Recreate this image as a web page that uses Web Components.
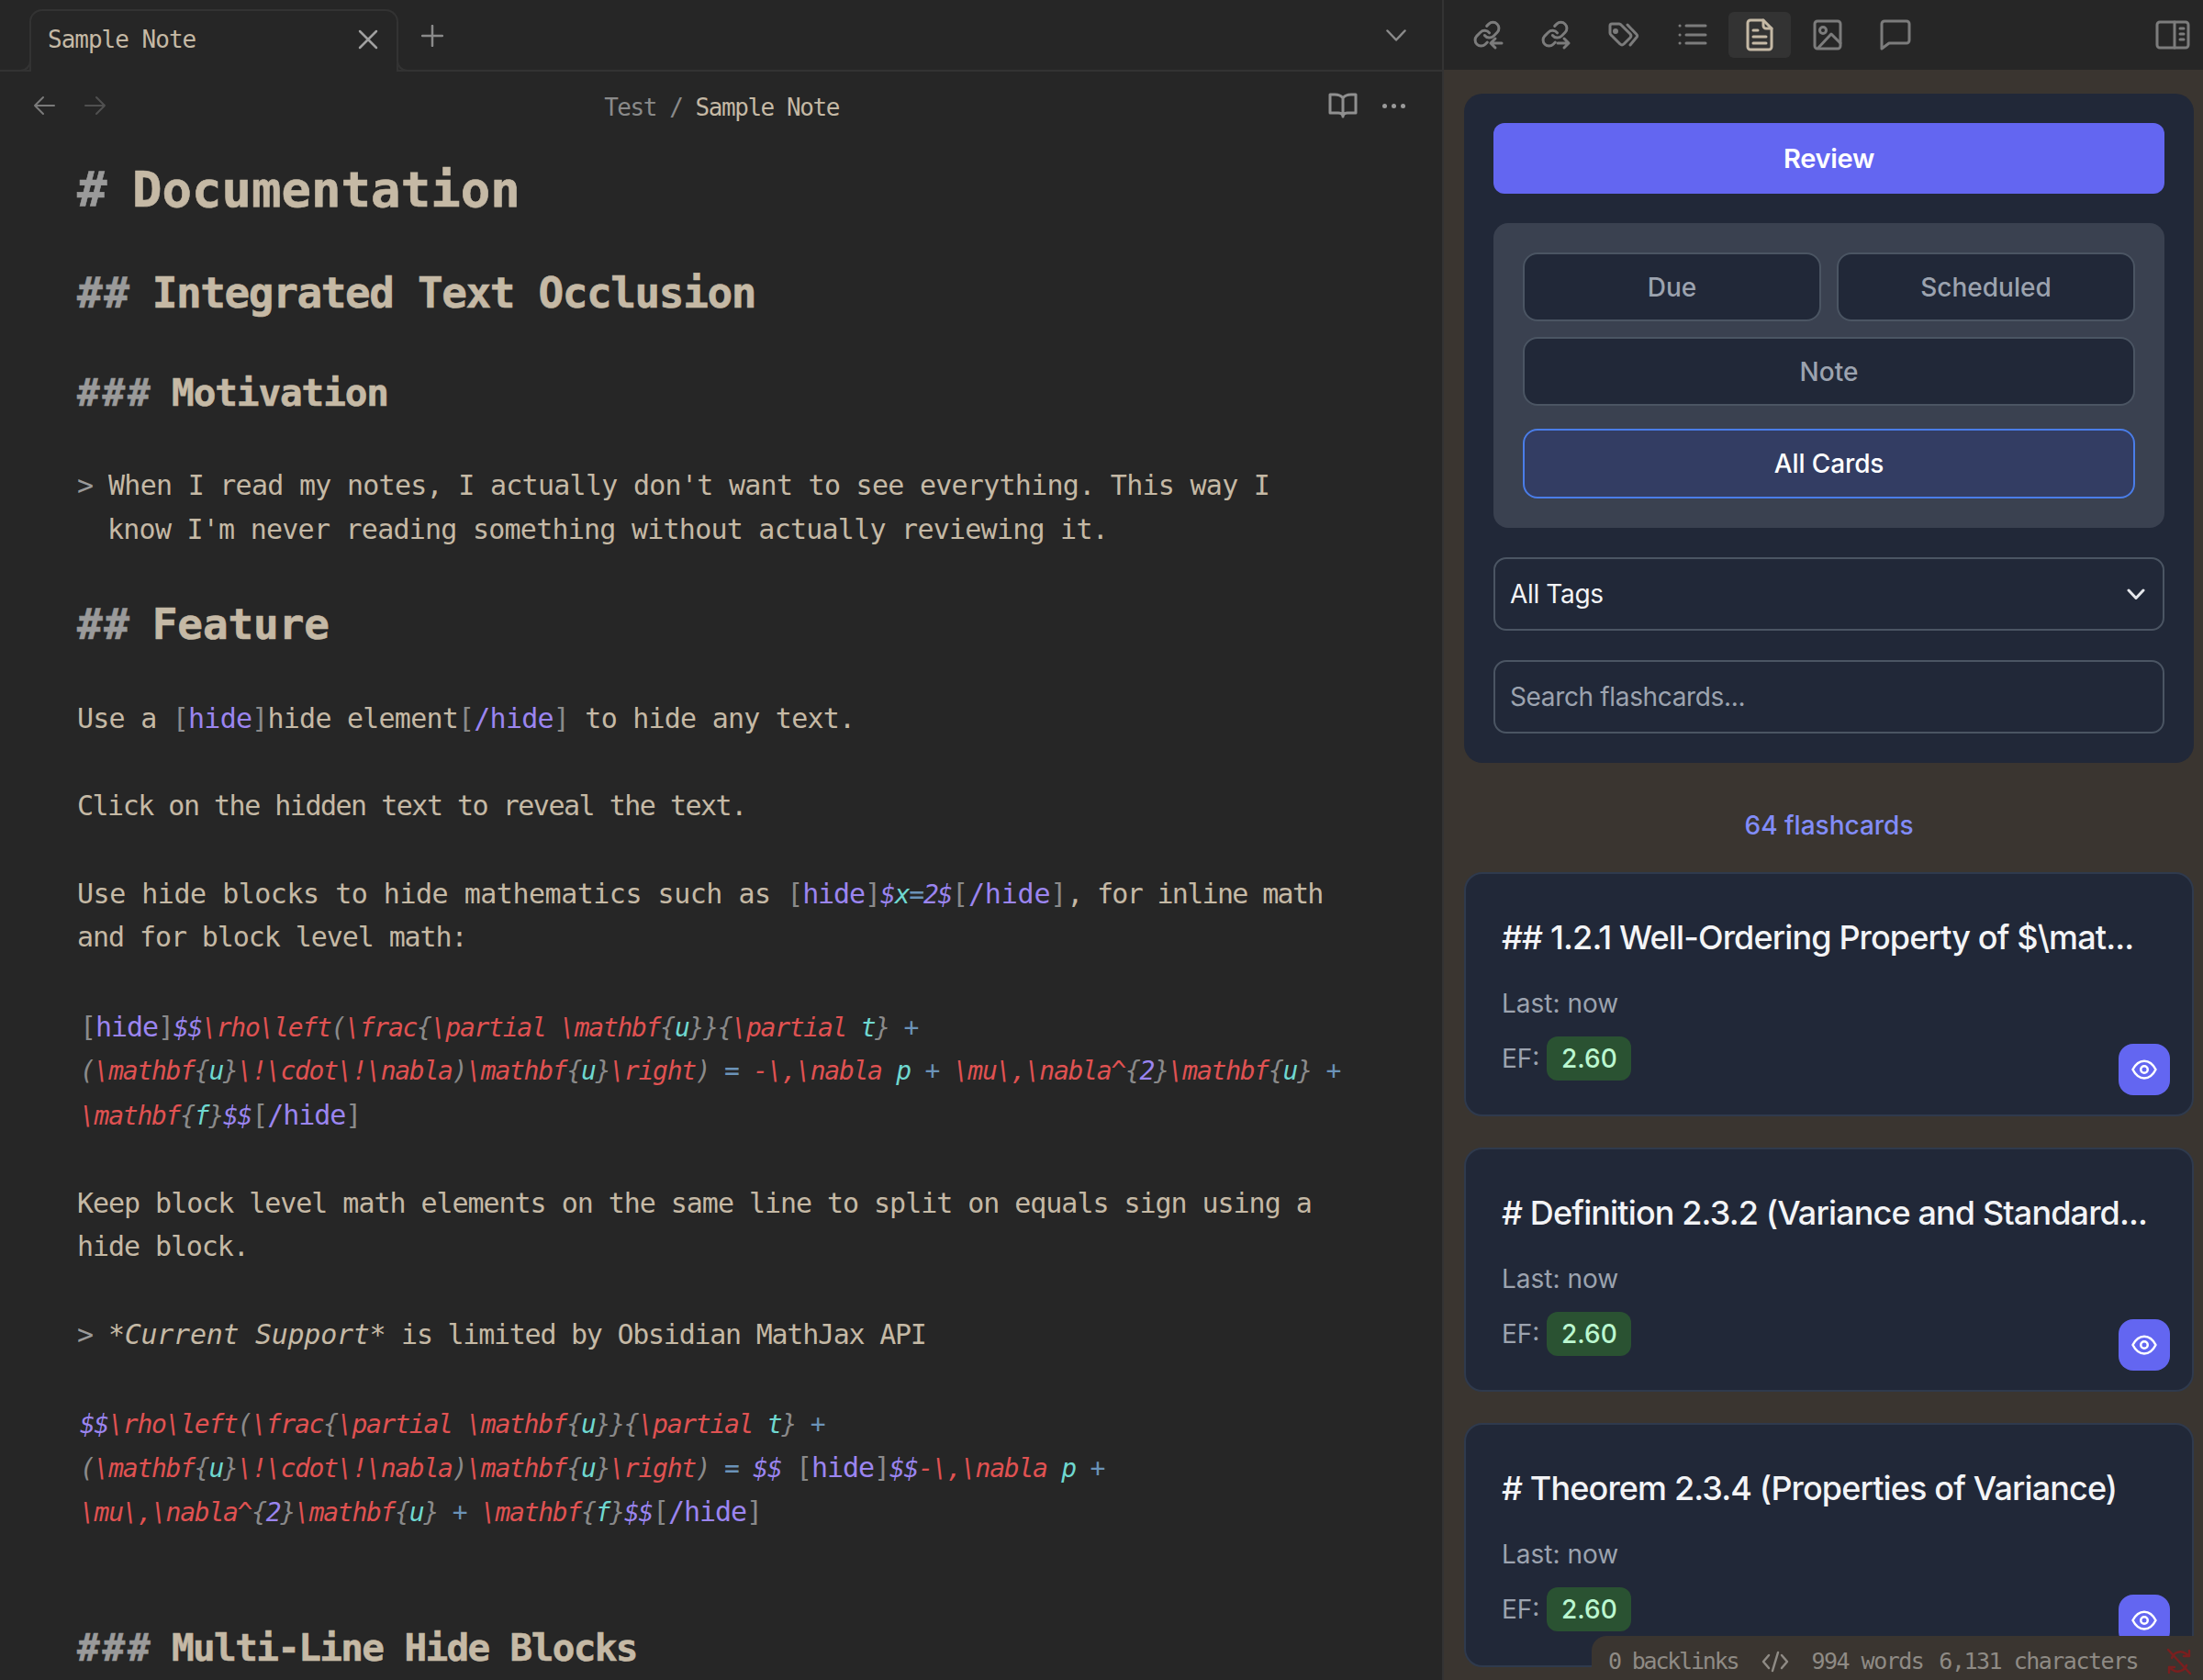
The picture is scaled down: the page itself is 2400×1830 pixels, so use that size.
<!DOCTYPE html>
<html>
<head>
<meta charset="utf-8">
<title>Sample Note</title>
<style>
  html, body { margin: 0; height: 100%; background: #262626; overflow: hidden; }
  body { display: flex; width: 2400px; height: 1830px; }
</style>
</head>
<body>
<note-pane></note-pane>
<side-pane></side-pane>

<script>
const MONO = '"DejaVu Sans Mono", "Liberation Mono", monospace';
const SANS = 'Inter, "Liberation Sans", sans-serif';

// stroke icons, all drawn on a 36 box
const svg = (body, size = 36, sw = 3) =>
  `<svg width="${size}" height="${size}" viewBox="0 0 36 36" fill="none" stroke="currentColor" stroke-width="${sw}" stroke-linecap="round" stroke-linejoin="round">${body}</svg>`;

const link = `<g transform="translate(2.4,1.600) scale(1.300)" stroke-width="2.300"><path d="M10 13a5 5 0 0 0 7.540.540l3-3a5 5 0 0 0-7.070-7.070l-1.720 1.710"/><path d="M14 11a5 5 0 0 0-7.540-.540l-3 3a5 5 0 0 0 7.070 7.070l1.710-1.710"/></g>`;

const icons = {
  linkIn: svg(link + '<path d="M34 27H22M27 22l-5 5 5 5"/>'),
  linkOut: svg(link + '<path d="M21 27h12M28 22l5 5-5 5"/>'),
  tags: svg('<path d="M6 6h8a3 3 0 0 1 2 1l10 10a3 3 0 0 1 0 4l-7 7a3 3 0 0 1-4 0L5 18a3 3 0 0 1-1-2V8a2 2 0 0 1 2-2z"/><path d="M23 7l10 10.500a2 2 0 0 1 0 3L26 29"/><circle cx="10" cy="14" r="1.500" fill="currentColor"/>'),
  list: svg('<path d="M12 8h21M12 18h21M12 27h21M5 8h.1M5 18h.1M5 27h.1"/>'),
  doc: svg('<path d="M22 2H8a3 3 0 0 0-3 3v26a3 3 0 0 0 3 3h20a3 3 0 0 0 3-3V11z"/><path d="M22 2v6a3 3 0 0 0 3 3h6"/><path d="M11 13h5M11 20h14M11 27h14"/>'),
  image: svg('<rect x="4" y="3" width="28" height="30" rx="3"/><circle cx="13" cy="13" r="3.500"/><path d="M8 32l14-15 10 10"/>'),
  comment: svg('<path d="M6 3h24a3 3 0 0 1 3 3v18a3 3 0 0 1-3 3H11l-8 6V6a3 3 0 0 1 3-3z"/>'),
  panel: `<svg width="38" height="32" viewBox="0 0 38 32" fill="none" stroke="currentColor" stroke-width="3" stroke-linecap="round" stroke-linejoin="round"><rect x="2" y="2" width="34" height="28" rx="3"/><path d="M21 2v28M27 9h4M27 15h4M27 21h4"/></svg>`,
  book: `<svg width="32" height="28" viewBox="0 0 32 28" fill="none" stroke="currentColor" stroke-width="3" stroke-linecap="round" stroke-linejoin="round"><path d="M16 6c-2-3-5-4-9-4H2v20h9c2 0 5 1 5 4 0-3 3-4 5-4h9V2h-5c-4 0-7 1-9 4zM16 6v20"/></svg>`,
  eye: `<svg width="30" height="30" viewBox="0 0 24 24" fill="none" stroke="#fff" stroke-width="2" stroke-linecap="round" stroke-linejoin="round"><path d="M2 12c2.500-5 6-7.500 10-7.500S19.500 7 22 12c-2.500 5-6 7.500-10 7.500S4.500 17 2 12z"/><circle cx="12" cy="12" r="3"/></svg>`
};

class TabStrip extends HTMLElement {
  connectedCallback() {
    this.attachShadow({ mode: 'open' });
    this.shadowRoot.innerHTML = `
      <style>
        :host { display: flex; align-items: flex-end; height: 78px; box-sizing: border-box; border-bottom: 2px solid #333; padding-left: 32px; color: #8a8a8a; font-family: ${MONO}; }
        .tab {
          position: relative; display: flex; align-items: center; justify-content: space-between;
          box-sizing: border-box; width: 402px; height: 68px; margin-bottom: -2px; padding: 0 20px 4px 18px;
          background: #262626; border: 2px solid #333; border-bottom: 0; border-radius: 14px 14px 0 0;
          color: #c5b9a5; font-size: 26px; letter-spacing: -1px;
        }
        .tab::before, .tab::after { content: ""; position: absolute; bottom: 0; width: 12px; height: 12px; border-bottom: 2px solid #333; }
        .tab::before { left: -14px; border-right: 2px solid #333; border-bottom-right-radius: 12px; }
        .tab::after { right: -14px; border-left: 2px solid #333; border-bottom-left-radius: 12px; }
        .x { color: #a0a0a0; display: flex; }
        .plus { margin: 0 0 25px 25px; display: flex; color: #8a8a8a; }
        .chev { margin: 0 39px 31px auto; display: flex; color: #8a8a8a; }
      </style>
      <div class="tab"><span>Sample Note</span>
        <span class="x"><svg width="22" height="22" viewBox="0 0 22 22" fill="none" stroke="currentColor" stroke-width="2.500" stroke-linecap="round"><path d="M2 2l18 18M20 2L2 20"/></svg></span>
      </div>
      <span class="plus"><svg width="24" height="24" viewBox="0 0 24 24" fill="none" stroke="currentColor" stroke-width="2.500" stroke-linecap="round"><path d="M12 1v22M1 12h22"/></svg></span>
      <span class="chev"><svg width="22" height="13" viewBox="0 0 22 13" fill="none" stroke="currentColor" stroke-width="2.500" stroke-linecap="round" stroke-linejoin="round"><path d="M1.500 1.500L11 11.500l9.500-10"/></svg></span>`;
  }
}

class ViewHeader extends HTMLElement {
  connectedCallback() {
    this.attachShadow({ mode: 'open' });
    this.shadowRoot.innerHTML = `
      <style>
        :host { display: grid; grid-template-columns: 1fr auto 1fr; align-items: center; height: 74px; padding: 0 40px 0 36px; color: #8a8a8a; font-family: ${MONO}; font-size: 26px; letter-spacing: -1.45px; }
        .nav { display: flex; gap: 32px; align-items: center; color: #7a7a7a; }
        .nav .off { color: #505050; }
        .crumb { padding: 3px 0 0 5px; }
        .crumb b { font-weight: 400; color: #c5b9a5; }
        .act { display: flex; gap: 27px; align-items: center; justify-content: flex-end; color: #8f8f8f; }
        .dots { display: flex; gap: 5px; }
        .dots i { width: 5px; height: 5px; border-radius: 50%; background: #9a9a9a; }
      </style>
      <div class="nav">
        <svg width="24" height="22" viewBox="0 0 24 22" fill="none" stroke="currentColor" stroke-width="2" stroke-linecap="round" stroke-linejoin="round"><path d="M23 11H2M11 2l-9 9 9 9"/></svg>
        <svg class="off" width="24" height="22" viewBox="0 0 24 22" fill="none" stroke="currentColor" stroke-width="2" stroke-linecap="round" stroke-linejoin="round"><path d="M1 11h21M13 2l9 9-9 9"/></svg>
      </div>
      <div class="crumb">Test / <b>Sample Note</b></div>
      <div class="act">${icons.book}<span class="dots"><i></i><i></i><i></i></span></div>`;
  }
}

// colours a line of latex source, token by token
function tokens(src) {
  return src.replace(/\[\/?hide\]|\$\$?|\\[a-zA-Z]+|\\[,!]|[{}()]|[+=\-]|\^|[a-z]|\d/g, t => {
    if (t.startsWith('[')) return `<span class="g tx">[</span><span class="p tx">${t.slice(1, -1)}</span><span class="g tx">]</span>`;
    if (t[0] === '$') return `<span class="p">${t}</span>`;
    if (t[0] === '\\' || t === '^') return `<span class="r">${t}</span>`;
    if ('{}()'.includes(t)) return `<span class="g">${t}</span>`;
    if ('+=-'.includes(t)) return `<span class="${t === '-' ? 'r' : 'b'}">${t}</span>`;
    if (/\d/.test(t)) return `<span class="p">${t}</span>`;
    return `<span class="c">${t}</span>`;
  });
}

class NoteEditor extends HTMLElement {
  connectedCallback() {
    this.attachShadow({ mode: 'open' });
    const tag = t => `<span class="g">[</span><span class="p">${t}</span><span class="g">]</span>`;
    const head = (k, marks, text, mt, ls) => `<div class="${k}" style="margin-top:${mt}px"><span class="mk">${marks}</span> <span${ls ? ` style="letter-spacing:${ls}px"` : ''}>${text}</span></div>`;
    const math = s => `<div class="ln m">${tokens(s)}</div>`;
    // the original face is not quite monospaced, so lines get their own tracking
    const ln = (html, ls, extra = '') => `<div class="ln ${extra}" style="${ls !== undefined ? `letter-spacing:${ls}px` : ''}">${html}</div>`;
    this.shadowRoot.innerHTML = `
      <style>
        :host { display: block; flex: 1; overflow: hidden; padding-left: 84px; color: #c5b9a5; font-family: ${MONO}; font-size: 30px; letter-spacing: -1.08px; font-weight: 400; }
        .h1, .h2, .h3 { font-weight: 700; white-space: pre; -webkit-text-stroke: 0.6px currentColor; }
        .h1 { font-size: 54px; line-height: 70px; letter-spacing: 0; }
        .h2 { font-size: 46px; line-height: 60px; letter-spacing: -1.4px; }
        .h3 { font-size: 41px; line-height: 56px; letter-spacing: -1.1px; }
        .mk { color: #9a9a9a; }
        .h1 .mk { margin-right: -5px; }
        .h2 .mk { letter-spacing: 1.5px; margin-right: -3px; }
        .h3 .mk { letter-spacing: 2.8px; margin-right: -3px; }
        .ln { height: 47.6px; line-height: 47.6px; white-space: pre; }
        .gap { height: 47.6px; }
        .q { padding-left: 33px; }
        .q .mk { margin-left: -33px; letter-spacing: -1.08px; }
        .m { padding-left: 3px; }
        .m, .im { font-size: 28px; font-style: oblique; letter-spacing: -1.26px; }
        .tx { font-style: normal; font-size: 30px; letter-spacing: -1.08px; }
        .em { font-style: oblique; letter-spacing: -0.28px; }
        .g { color: #8a8a8a; }
        .p { color: #9b85f0; }
        .r { color: #e05252; }
        .c { color: #6fd8d0; }
        .b { color: #6b93b8; }
      </style>
      ${head('h1', '#', 'Documentation', 20)}
      ${head('h2', '##', 'Integrated Text Occlusion', 47)}
      ${head('h3', '###', 'Motivation', 51)}
      <div style="height:49px"></div>
      ${ln('<span class="mk">&gt; </span>When I read my notes, I actually don\'t want to see everything. This way I', -0.73, 'q')}
      ${ln('know I\'m never reading something without actually reviewing it.', -0.76, 'q')}
      ${head('h2', '##', 'Feature', 50, -0.1)}
      <div style="height:49px"></div>
      ${ln(`Use a ${tag('hide')}hide element${tag('/hide')} to hide any text.`, -0.77)}
      <div class="gap"></div>
      ${ln('Click on the hidden text to reveal the text.', -1.5)}
      <div class="gap"></div>
      ${ln(`<span style="letter-spacing:-.49px">Use hide blocks to hide mathematics such as </span>${tag('hide')}<span class="im">${tokens('$x=2$')}</span><span style="letter-spacing:-.2px">${tag('/hide')}</span><span style="letter-spacing:-1.68px">, for inline math</span>`)}
      ${ln('and for block level math:')}
      <div class="gap" style="height:50.6px"></div>
      ${math('[hide]$$\\rho\\left(\\frac{\\partial \\mathbf{u}}{\\partial t} +')}
      ${math('(\\mathbf{u}\\!\\cdot\\!\\nabla)\\mathbf{u}\\right) = -\\,\\nabla p + \\mu\\,\\nabla^{2}\\mathbf{u} +')}
      ${math('\\mathbf{f}$$[/hide]')}
      <div class="gap" style="height:48.6px"></div>
      ${ln('Keep block level math elements on the same line to split on equals sign using a', -1.04)}
      ${ln('hide block.')}
      <div class="gap"></div>
      ${ln('<span class="mk">&gt; </span><span class="em">*Current Support*</span> is limited by Obsidian MathJax API', -1.25, 'q')}
      <div class="gap" style="height:50.6px"></div>
      ${math('$$\\rho\\left(\\frac{\\partial \\mathbf{u}}{\\partial t} +')}
      ${math('(\\mathbf{u}\\!\\cdot\\!\\nabla)\\mathbf{u}\\right) = $$ [hide]$$-\\,\\nabla p +')}
      ${math('\\mu\\,\\nabla^{2}\\mathbf{u} + \\mathbf{f}$$[/hide]')}
      ${head('h3', '###', 'Multi-Line Hide Blocks', 97, -1.65)}`;
  }
}

class NotePane extends HTMLElement {
  connectedCallback() {
    this.attachShadow({ mode: 'open' });
    this.shadowRoot.innerHTML = `
      <style>:host { display: flex; flex-direction: column; width: 1573px; flex: none; box-sizing: border-box; height: 1830px; border-right: 2px solid #333; overflow: hidden; }</style>
      <tab-strip></tab-strip><view-header></view-header><note-editor></note-editor>`;
  }
}

class SideTabs extends HTMLElement {
  connectedCallback() {
    this.attachShadow({ mode: 'open' });
    const names = ['linkIn', 'linkOut', 'tags', 'list', 'doc', 'image', 'comment'];
    this.shadowRoot.innerHTML = `
      <style>
        :host { display: flex; align-items: center; height: 76px; padding: 0 14px 0 13px; color: #7c7c7c; background: #262626; }
        .t { display: flex; align-items: center; justify-content: center; width: 68px; height: 50px; margin-right: 6.2px; border-radius: 6px; }
        .t.on { background: #333; color: #c5b9a5; }
        .p { margin-left: auto; display: flex; }
      </style>
      ${names.map(n => `<div class="t ${n === 'doc' ? 'on' : ''}">${icons[n]}</div>`).join('')}
      <div class="p">${icons.panel}</div>`;
  }
}

class ReviewPanel extends HTMLElement {
  connectedCallback() {
    this.attachShadow({ mode: 'open' });
    this.shadowRoot.innerHTML = `
      <style>
        :host { display: flex; flex-direction: column; gap: 32px; box-sizing: border-box; padding: 32px; background: #212838; border-radius: 20px; font-family: ${SANS}; font-size: 28px; flex: none; }
        button { font: inherit; cursor: pointer; }
        .review { height: 77px; border: 0; border-radius: 12px; background: #6366f1; color: #fff; font-size: 29px; font-weight: 600; letter-spacing: -0.3px; }
        .group { display: grid; grid-template-columns: 1fr 1fr; gap: 17px; padding: 32px; background: #3a4150; border-radius: 16px; }
        .group button { height: 75px; box-sizing: border-box; background: #212838; color: #9ca3af; border: 2px solid #4b5563; border-radius: 16px; font-weight: 500; }
        .wide { grid-column: 1 / -1; }
        .group .on { margin-top: 8px; height: 76px; background: #333d63; color: #fff; border-color: #4a7de8; font-weight: 500; letter-spacing: -0.1px; }
        .field { display: flex; align-items: center; justify-content: space-between; box-sizing: border-box; height: 80px; padding: 0 19px 0 16px; border: 2px solid #4b5563; border-radius: 14px; color: #f3f4f6; letter-spacing: -0.35px; }
        .ph { color: #9ca3af; }
      </style>
      <button class="review">Review</button>
      <div class="group">
        <button>Due</button><button>Scheduled</button>
        <button class="wide">Note</button>
        <button class="wide on">All Cards</button>
      </div>
      <div class="field"><span>All Tags</span>
        <svg width="20" height="13" viewBox="0 0 20 13" fill="none" stroke="#e5e7eb" stroke-width="3" stroke-linecap="round" stroke-linejoin="round"><path d="M2 2l8 8.500L18 2"/></svg>
      </div>
      <div class="field ph">Search flashcards...</div>`;
  }
}

class FlashCard extends HTMLElement {
  connectedCallback() {
    this.attachShadow({ mode: 'open' });
    this.shadowRoot.innerHTML = `
      <style>
        :host { display: block; flex: none; box-sizing: border-box; height: 266px; padding: 40px 24px 0 39px; background: #212838; border: 2px solid #2f3a4d; border-radius: 20px; font-family: ${SANS}; font-size: 28px; color: #9ca3af; }
        .title { height: 58px; line-height: 58px; font-size: 36px; font-weight: 500; letter-spacing: -0.87px; color: #f3f4f6; white-space: nowrap; overflow: hidden; }
        .last { margin-top: 21px; line-height: 44px; }
        .row { display: flex; justify-content: space-between; margin-top: 14px; }
        .ef { display: flex; align-items: center; height: 48px; gap: 8px; }
        .badge { display: flex; align-items: center; justify-content: center; width: 92px; height: 48px; border-radius: 12px; background: #2a5232; color: #bbf7d0; font-weight: 500; }
        .eye { display: flex; align-items: center; justify-content: center; width: 56px; height: 56px; margin-top: 8px; border-radius: 16px; background: #6366f1; }
      </style>
      <div class="title">${this.getAttribute('heading')}</div>
      <div class="last">Last: now</div>
      <div class="row">
        <div class="ef">EF: <span class="badge">2.60</span></div>
        <div class="eye">${icons.eye}</div>
      </div>`;
  }
}

class StatusBar extends HTMLElement {
  connectedCallback() {
    this.attachShadow({ mode: 'open' });
    this.shadowRoot.innerHTML = `
      <style>
        :host { position: absolute; right: 0; bottom: 0; display: flex; align-items: center; box-sizing: border-box; width: 666px; height: 48px; padding: 7px 11px 0 18px; background: #3a3530; border-top-left-radius: 16px; color: #8f8b85; font-family: ${MONO}; font-size: 25px; letter-spacing: -1.5px; white-space: pre; }
        .bl { letter-spacing: -2.2px; }
        .code { display: flex; margin: 0 24px 0 26px; }
        .w { margin-right: 17px; }
        .sync { display: flex; margin-left: auto; color: #7a1f1f; }
      </style>
      <span class="bl">0 backlinks</span>
      <span class="code"><svg width="30" height="26" viewBox="0 0 30 26" fill="none" stroke="currentColor" stroke-width="2.500" stroke-linecap="round" stroke-linejoin="round"><path d="M8 6l-6 7 6 7M22 6l6 7-6 7M18 3l-6 20"/></svg></span>
      <span class="w">994 words</span><span>6,131 characters</span>
      <span class="sync"><svg width="30" height="30" viewBox="0 0 30 30" fill="none" stroke="currentColor" stroke-width="2.500" stroke-linecap="round" stroke-linejoin="round"><path d="M3 2l24 26M7 11a10 10 0 0 1 15-5l4 3M26 3v6h-6M23 19a10 10 0 0 1-15 5l-4-3M4 27v-6h6"/></svg></span>`;
  }
}

class SidePane extends HTMLElement {
  connectedCallback() {
    this.attachShadow({ mode: 'open' });
    this.shadowRoot.innerHTML = `
      <style>
        :host { position: relative; display: flex; flex-direction: column; flex: 1; height: 1830px; overflow: hidden; background: #3a3530; }
        .body { display: flex; flex-direction: column; padding: 26px 10px 0 22px; }
        .count { margin: 44px 0 27px; text-align: center; line-height: 48px; font-family: ${SANS}; font-size: 28px; font-weight: 500; color: #818cf8; }
        .cards { display: flex; flex-direction: column; gap: 34px; }
      </style>
      <side-tabs></side-tabs>
      <div class="body">
        <review-panel></review-panel>
        <div class="count">64 flashcards</div>
        <div class="cards">
          <flash-card heading="## 1.2.1 Well-Ordering Property of $\\mat..."></flash-card>
          <flash-card heading="# Definition 2.3.2 (Variance and Standard..."></flash-card>
          <flash-card heading="# Theorem 2.3.4 (Properties of Variance)"></flash-card>
        </div>
      </div>
      <status-bar></status-bar>`;
  }
}

customElements.define('tab-strip', TabStrip);
customElements.define('view-header', ViewHeader);
customElements.define('note-editor', NoteEditor);
customElements.define('note-pane', NotePane);
customElements.define('side-tabs', SideTabs);
customElements.define('review-panel', ReviewPanel);
customElements.define('flash-card', FlashCard);
customElements.define('status-bar', StatusBar);
customElements.define('side-pane', SidePane);
</script>
</body>
</html>
